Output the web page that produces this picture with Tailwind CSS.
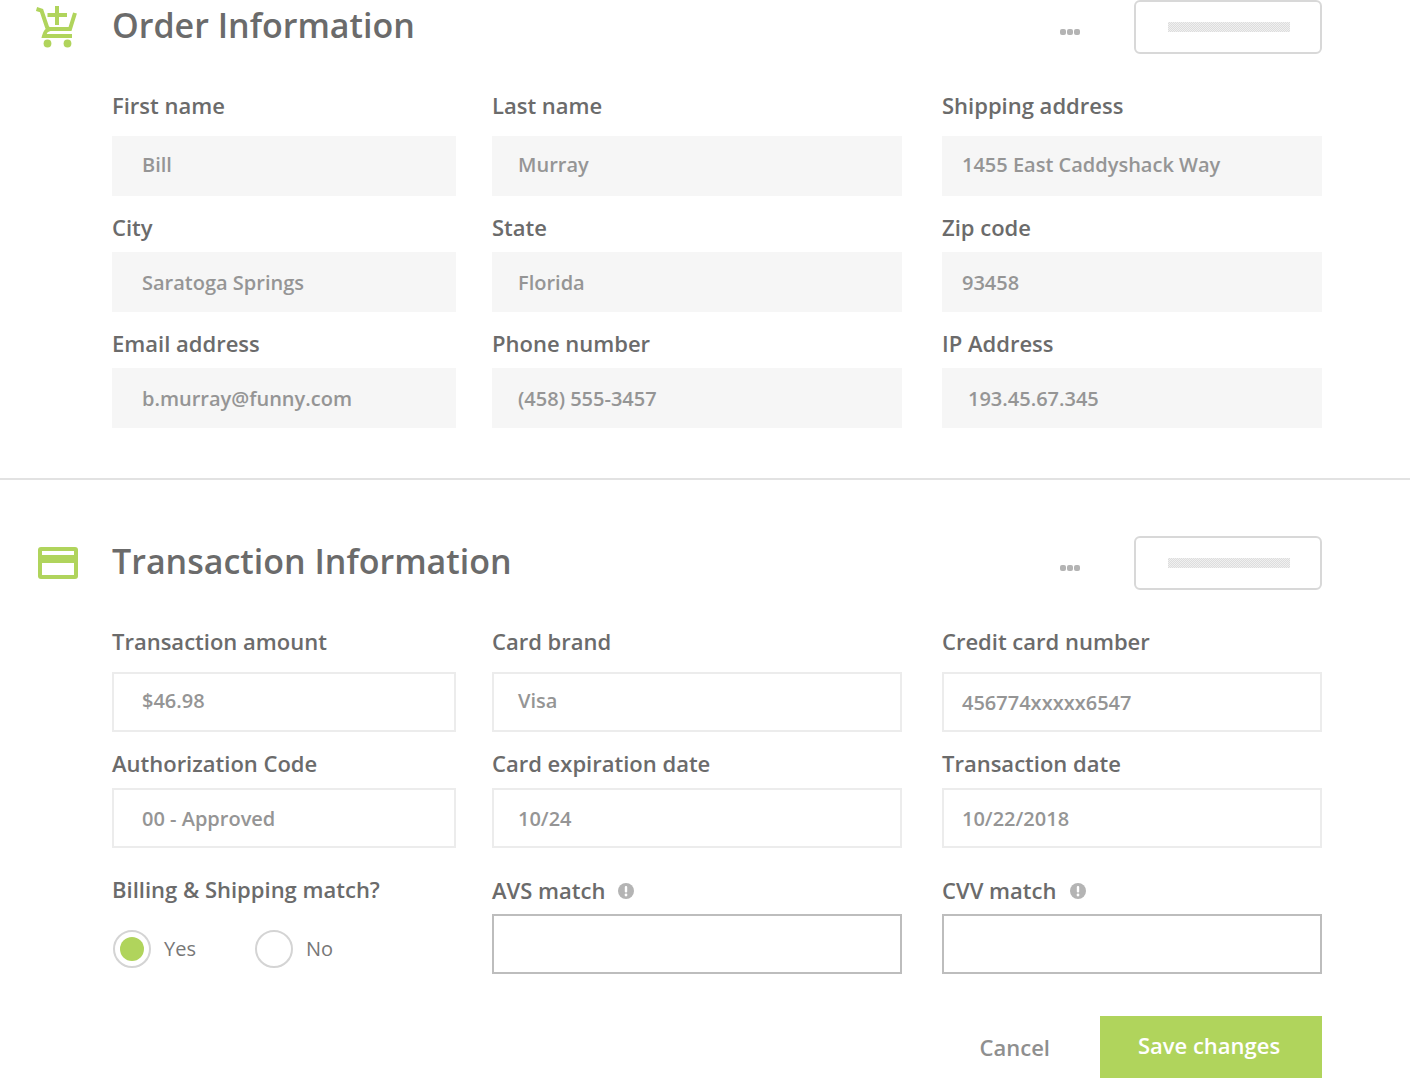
<!DOCTYPE html>
<html lang="en">
<head>
  <meta charset="UTF-8">
  <title>Order details</title>
  <script src="https://cdn.jsdelivr.net/npm/@tailwindcss/browser@4"></script>
</head>
<body class="bg-white font-['Open_Sans',sans-serif] text-[#6b6b6b] h-[1078px] overflow-hidden">

  <!-- Order Information -->
  <section class="pb-[50px] border-b-2 border-[#e2e2e2]">
    <div class="flex items-center h-[54px] pl-[36px] pr-[88px]">
      <svg class="w-[42px] h-[44px] mr-[34px]" viewBox="0 0 42 44" fill="none" stroke="#b0d45c" stroke-width="4">
        <path d="M0.5 4 L5.5 5.5 L11 22 C11.5 23.5 13 24 14 24 L34 24 L39 8" />
        <path d="M14 24 C10 25 9 27 8 31 L36 31" />
        <path d="M21 1 V20 M11.5 10 H31" />
        <circle cx="11.5" cy="38.5" r="3.9" fill="#b0d45c" stroke="none" />
        <circle cx="31.5" cy="38.5" r="3.9" fill="#b0d45c" stroke="none" />
      </svg>
      <h2 class="text-[34px] leading-[54px] font-semibold mt-[-4px]">Order Information</h2>
      <div class="ml-auto mr-[53px] mt-[10px] flex gap-[1px]">
        <span class="w-[6px] h-[6px] rounded-[2px] bg-[#b4b4b4]"></span>
        <span class="w-[6px] h-[6px] rounded-[2px] bg-[#b4b4b4]"></span>
        <span class="w-[6px] h-[6px] rounded-[2px] bg-[#b4b4b4] mr-[1px]"></span>
      </div>
      <button class="w-[188px] h-[54px] rounded-[6px] border-2 border-[#d8d8d8] flex items-center justify-center">
        <span class="w-[122px] h-[10px] ml-[1px] bg-[repeating-conic-gradient(#dddddd_0_25%,#f0f0f0_0_50%)] bg-[length:2px_2px]"></span>
      </button>
    </div>

    <div class="grid grid-cols-[344px_410px_380px] gap-x-[36px] pl-[112px] mt-[40px]">
      <div class="grid grid-cols-subgrid col-span-3">
        <div>
          <label class="block text-[22px] leading-[24px] font-semibold mb-[18px] mt-[-1px] pb-[1px]">First name</label>
          <div class="h-[60px] bg-[#f6f6f6] pl-[30px] text-[20px] leading-[58px] font-semibold text-[#959595]">Bill</div>
        </div>
        <div>
          <label class="block text-[22px] leading-[24px] font-semibold mb-[18px] mt-[-1px] pb-[1px]">Last name</label>
          <div class="h-[60px] bg-[#f6f6f6] pl-[26px] text-[20px] leading-[58px] font-semibold text-[#959595]">Murray</div>
        </div>
        <div class="ml-[4px] w-[380px]">
          <label class="block text-[22px] leading-[24px] font-semibold mb-[18px] mt-[-1px] pb-[1px]">Shipping address</label>
          <div class="h-[60px] bg-[#f6f6f6] pl-[20px] text-[20px] leading-[58px] font-semibold text-[#959595]">1455 East Caddyshack Way</div>
        </div>
      </div>
      <div class="grid grid-cols-subgrid col-span-3 mt-[20px]">
        <div>
          <label class="block text-[22px] leading-[24px] font-semibold mb-[12px] mt-[-1px] pb-[1px]">City</label>
          <div class="h-[60px] bg-[#f6f6f6] pl-[30px] text-[20px] leading-[62px] font-semibold text-[#959595]">Saratoga Springs</div>
        </div>
        <div>
          <label class="block text-[22px] leading-[24px] font-semibold mb-[12px] mt-[-1px] pb-[1px]">State</label>
          <div class="h-[60px] bg-[#f6f6f6] pl-[26px] text-[20px] leading-[62px] font-semibold text-[#959595]">Florida</div>
        </div>
        <div class="ml-[4px] w-[380px]">
          <label class="block text-[22px] leading-[24px] font-semibold mb-[12px] mt-[-1px] pb-[1px]">Zip code</label>
          <div class="h-[60px] bg-[#f6f6f6] pl-[20px] text-[20px] leading-[62px] font-semibold text-[#959595]">93458</div>
        </div>
      </div>
      <div class="grid grid-cols-subgrid col-span-3 mt-[20px]">
        <div>
          <label class="block text-[22px] leading-[24px] font-semibold mb-[12px] mt-[-1px] pb-[1px]">Email address</label>
          <div class="h-[60px] bg-[#f6f6f6] pl-[30px] text-[20px] leading-[62px] font-semibold text-[#959595]">b.murray@funny.com</div>
        </div>
        <div>
          <label class="block text-[22px] leading-[24px] font-semibold mb-[12px] mt-[-1px] pb-[1px]">Phone number</label>
          <div class="h-[60px] bg-[#f6f6f6] pl-[26px] text-[20px] leading-[62px] font-semibold text-[#959595]">(458) 555-3457</div>
        </div>
        <div class="ml-[4px] w-[380px]">
          <label class="block text-[22px] leading-[24px] font-semibold mb-[12px] mt-[-1px] pb-[1px]">IP Address</label>
          <div class="h-[60px] bg-[#f6f6f6] pl-[26px] text-[20px] leading-[62px] font-semibold text-[#959595]">193.45.67.345</div>
        </div>
      </div>
    </div>
  </section>

  <!-- Transaction Information -->
  <section class="pt-[56px]">
    <div class="flex items-center h-[54px] pl-[38px] pr-[88px]">
      <svg class="w-[40px] h-[32px] mr-[34px]" viewBox="0 0 40 32">
        <rect width="40" height="32" rx="3" fill="#b0d45c" />
        <rect x="4" y="4" width="32" height="4" fill="#fff" />
        <rect x="4" y="16" width="32" height="12" fill="#fff" />
      </svg>
      <h2 class="text-[34px] leading-[54px] font-semibold mt-[-4px]">Transaction Information</h2>
      <div class="ml-auto mr-[53px] mt-[10px] flex gap-[1px]">
        <span class="w-[6px] h-[6px] rounded-[2px] bg-[#b4b4b4]"></span>
        <span class="w-[6px] h-[6px] rounded-[2px] bg-[#b4b4b4]"></span>
        <span class="w-[6px] h-[6px] rounded-[2px] bg-[#b4b4b4] mr-[1px]"></span>
      </div>
      <button class="w-[188px] h-[54px] rounded-[6px] border-2 border-[#d8d8d8] flex items-center justify-center">
        <span class="w-[122px] h-[10px] ml-[1px] bg-[repeating-conic-gradient(#dddddd_0_25%,#f0f0f0_0_50%)] bg-[length:2px_2px]"></span>
      </button>
    </div>

    <div class="grid grid-cols-[344px_410px_380px] gap-x-[36px] pl-[112px] mt-[40px]">
      <div class="grid grid-cols-subgrid col-span-3">
        <div>
          <label class="block text-[22px] leading-[24px] font-semibold mb-[18px] mt-[-1px] pb-[1px]">Transaction amount</label>
          <div class="h-[60px] border-2 border-[#ececec] pl-[28px] text-[20px] leading-[54px] font-semibold text-[#959595]">$46.98</div>
        </div>
        <div>
          <label class="block text-[22px] leading-[24px] font-semibold mb-[18px] mt-[-1px] pb-[1px]">Card brand</label>
          <div class="h-[60px] border-2 border-[#ececec] pl-[24px] text-[20px] leading-[54px] font-semibold text-[#959595]">Visa</div>
        </div>
        <div class="ml-[4px] w-[380px]">
          <label class="block text-[22px] leading-[24px] font-semibold mb-[18px] mt-[-1px] pb-[1px]">Credit card number</label>
          <div class="h-[60px] border-2 border-[#ececec] pl-[18px] text-[20px] leading-[58px] font-semibold text-[#959595]">456774xxxxx6547</div>
        </div>
      </div>
      <div class="grid grid-cols-subgrid col-span-3 mt-[20px]">
        <div>
          <label class="block text-[22px] leading-[24px] font-semibold mb-[12px] mt-[-1px] pb-[1px]">Authorization Code</label>
          <div class="h-[60px] border-2 border-[#ececec] pl-[28px] text-[20px] leading-[58px] font-semibold text-[#959595]">00 - Approved</div>
        </div>
        <div>
          <label class="block text-[22px] leading-[24px] font-semibold mb-[12px] mt-[-1px] pb-[1px]">Card expiration date</label>
          <div class="h-[60px] border-2 border-[#ececec] pl-[24px] text-[20px] leading-[58px] font-semibold text-[#959595]">10/24</div>
        </div>
        <div class="ml-[4px] w-[380px]">
          <label class="block text-[22px] leading-[24px] font-semibold mb-[12px] mt-[-1px] pb-[1px]">Transaction date</label>
          <div class="h-[60px] border-2 border-[#ececec] pl-[18px] text-[20px] leading-[58px] font-semibold text-[#959595]">10/22/2018</div>
        </div>
      </div>
      <div class="grid grid-cols-subgrid col-span-3 mt-[30px]">
        <div>
          <label class="block text-[22px] leading-[24px] font-semibold mb-[12px] mt-[-1px] pb-[1px]">Billing &amp; Shipping match?</label>
          <div class="flex items-center h-[60px] text-[20px] text-[#777] pl-[1px] pt-[10px]">
            <span class="w-[38px] h-[38px] rounded-full border-2 border-[#d4d4d4] flex items-center justify-center mr-[13px]">
              <span class="w-[24px] h-[24px] rounded-full bg-[#b0d45c]"></span>
            </span>
            <span class="w-[91px]">Yes</span>
            <span class="w-[38px] h-[38px] rounded-full border-2 border-[#d4d4d4] mr-[13px]"></span>
            <span>No</span>
          </div>
        </div>
        <div>
          <label class="flex items-center text-[22px] leading-[24px] font-semibold mb-[12px]">
            AVS match
            <svg class="w-[16px] h-[16px] ml-[13px] mt-[2px]" viewBox="0 0 16 16"><circle cx="8" cy="8" r="8" fill="#b4b4b4" /><rect x="6.8" y="3" width="2.4" height="6.5" rx="1" fill="#fff" /><circle cx="8" cy="12" r="1.4" fill="#fff" /></svg>
          </label>
          <div class="h-[60px] border-2 border-[#bdbdbd]"></div>
        </div>
        <div class="ml-[4px] w-[380px]">
          <label class="flex items-center text-[22px] leading-[24px] font-semibold mb-[12px]">
            CVV match
            <svg class="w-[16px] h-[16px] ml-[14px] mt-[2px]" viewBox="0 0 16 16"><circle cx="8" cy="8" r="8" fill="#b4b4b4" /><rect x="6.8" y="3" width="2.4" height="6.5" rx="1" fill="#fff" /><circle cx="8" cy="12" r="1.4" fill="#fff" /></svg>
          </label>
          <div class="h-[60px] border-2 border-[#bdbdbd]"></div>
        </div>
      </div>
    </div>

    <div class="flex justify-end items-center pr-[88px] mt-[42px]">
      <button class="text-[22px] font-semibold text-[#8f8f8f] mr-[50px]">Cancel</button>
      <button class="w-[222px] h-[62px] bg-[#b0d45c] text-white text-[22px] font-semibold pb-[4px] pr-[4px]">Save changes</button>
    </div>
  </section>

</body>
</html>
